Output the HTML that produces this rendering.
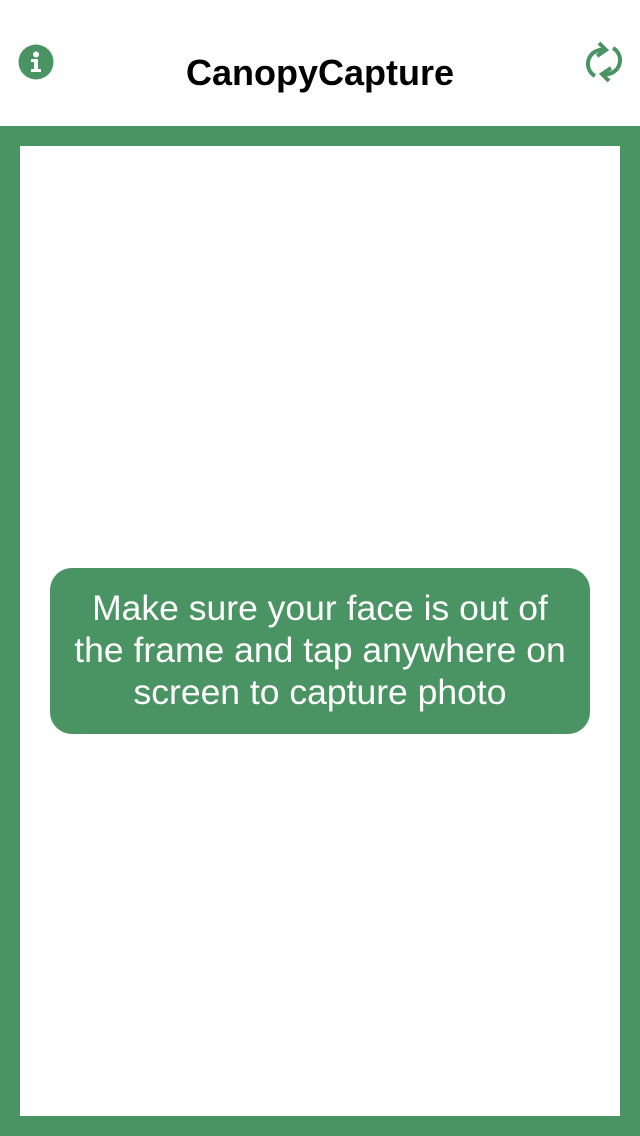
<!DOCTYPE html>
<html><head><style>
html,body{margin:0;padding:0;width:640px;height:1136px;overflow:hidden;background:#fff;font-family:"Liberation Sans",Arial,sans-serif}
.title{position:absolute;top:52px;left:0;width:640px;text-align:center;font-weight:bold;font-size:36px;color:#000}
.frame{position:absolute;top:126px;left:0;width:600px;height:970px;border:20px solid #4a9362;background:#fff}
.box{position:absolute;left:50px;top:568px;width:540px;height:166px;background:#4a9362;border-radius:22px;color:#fff;font-size:35.5px;line-height:42px;text-align:center;box-sizing:border-box;padding-top:19px;white-space:nowrap}
</style></head><body>
<svg style="position:absolute;left:18px;top:44px" width="36" height="36" viewBox="0 0 36 36">
<circle cx="18" cy="18" r="17.5" fill="#4a9362"/>
<circle cx="18" cy="10.5" r="3" fill="#fff"/>
<path d="M13 15h7v10h3v3H13v-3h3v-7h-3z" fill="#fff"/>
</svg>
<div class="title">CanopyCapture</div>
<svg style="position:absolute;left:584px;top:38px" width="40" height="48" viewBox="0 0 40 48">
<path d="M11 38 A14 14 0 0 1 20 12" fill="none" stroke="#4a9362" stroke-width="4"/>
<path d="M15 5 L22 12 L13 18" fill="none" stroke="#4a9362" stroke-width="4"/>
<path d="M29 10 A14 14 0 0 1 20 36" fill="none" stroke="#4a9362" stroke-width="4"/>
<path d="M27 30 L18 36 L25 43" fill="none" stroke="#4a9362" stroke-width="4"/>
</svg>
<div class="frame"></div>
<div class="box">Make sure your face is out of<br>the frame and tap anywhere on<br>screen to capture photo</div>
</body></html>
